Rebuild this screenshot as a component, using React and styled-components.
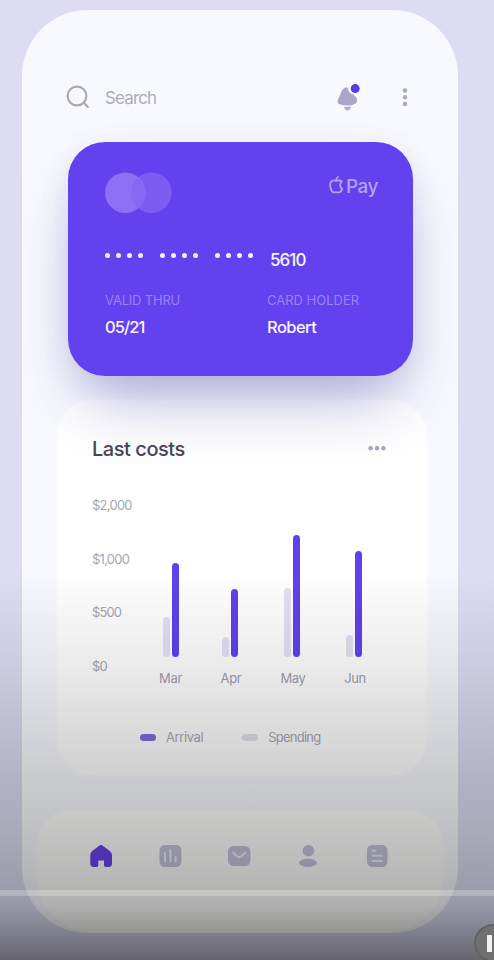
import React from "react";
import styled, { createGlobalStyle } from "styled-components";

const GlobalStyle = createGlobalStyle`
  * { box-sizing: border-box; }
  body { margin: 0; background: #dddcf2; }
`;

const Stage = styled.div`
  position: relative;
  width: 494px;
  height: 960px;
  padding: 10px 36px 0 22px;
  overflow: hidden;
  background: #dddcf3;
  font-family: Inter, "Liberation Sans", sans-serif;
`;

const Phone = styled.main`
  width: 436px;
  height: 923px;
  border-radius: 66px;
  overflow: hidden;
  display: flex;
  flex-direction: column;
  background: #f8f9fe;
`;

const TopBar = styled.header`
  display: flex;
  align-items: center;
  height: 40px;
  margin: 67px 50px 25px 44px;
  flex: none;
`;

const SearchLabel = styled.span`
  flex: 1;
  margin: 1px 0 0 15px;
  font-size: 17px;
  letter-spacing: -0.85px;
  color: #adabbc;
`;

const BellIcon = styled.svg`
  display: block;
  margin-right: 41px;
`;

const PayCard = styled.section`
  position: relative;
  z-index: 1;
  flex: none;
  width: 345px;
  height: 234px;
  margin-left: 46px;
  padding: 30px 35px 0 37px;
  border-radius: 37px;
  color: #f8f5ff;
  background: #6241ee;
  box-shadow: 0 38px 64px -14px rgba(84, 80, 170, 0.4), 0 8px 28px rgba(90, 85, 160, 0.12);
`;

const CardTop = styled.div`
  display: flex;
  justify-content: space-between;
  height: 68px;
`;

const ApplePay = styled.div`
  display: flex;
  align-items: flex-start;
  gap: 2px;
  height: 30px;
  font-size: 19px;
  line-height: 30px;
  font-weight: 500;
  letter-spacing: -0.5px;
  color: #b5a1fa;
  svg { margin-top: 4px; }
`;

const NumberRow = styled.div`
  display: flex;
  height: 40px;
`;

const Dots = styled.div`
  display: flex;
  gap: 6px;
  margin: 13px 17px 0 0;
`;

const Dot = styled.i`
  width: 5px;
  height: 5px;
  border-radius: 50%;
  background: #f5f1ff;
`;

const Digits = styled.span`
  font-size: 17px;
  line-height: 41px;
  font-weight: 500;
  letter-spacing: -0.95px;
`;

const Details = styled.dl`
  display: grid;
  grid-template-columns: 162px 1fr;
  margin: 9px 0 0;
  dt, dd { margin: 0; white-space: nowrap; }
`;

const DetailName = styled.dt`
  font-size: 13px;
  line-height: 22px;
  letter-spacing: ${(p) => p.$tracking};
  color: #9a83f6;
`;

const DetailValue = styled.dd`
  font-size: 16.5px;
  line-height: 33px;
  font-weight: 500;
  letter-spacing: ${(p) => p.$tracking};
`;

const CostsCard = styled.section`
  flex: none;
  width: 370px;
  height: 375px;
  margin: 24px 0 0 35px;
  padding: 34px 0 0 35px;
  border-radius: 36px;
  background: #fff;
  box-shadow: 0 0 6px rgba(255, 255, 255, 0.7);
`;

const CostsHeader = styled.div`
  display: flex;
  justify-content: space-between;
  align-items: center;
  height: 30px;
  padding-right: 41px;
`;

const Title = styled.h2`
  margin: 0;
  font-size: 20px;
  font-weight: 500;
  letter-spacing: -0.45px;
  color: #47445a;
`;

const Chart = styled.div`
  display: flex;
  height: 220px;
  margin-top: 31px;
`;

const Scale = styled.div`
  display: flex;
  flex-direction: column;
  width: 49px;
  gap: 33.5px;
`;

const Tick = styled.span`
  font-size: 13px;
  line-height: 20px;
  letter-spacing: ${(p) => p.$tracking};
  color: #a7a4b5;
`;

const Months = styled.div`
  display: grid;
  grid-template-columns: 59px 60px 63px 62px;
`;

const Month = styled.div`
  display: flex;
  flex-direction: column;
  align-items: center;
  span {
    margin-top: 11px;
    padding-left: ${(p) => p.$labelShift}px;
    font-size: 13px;
    line-height: 20px;
    letter-spacing: -0.35px;
    color: #a19eb0;
  }
`;

const Bars = styled.div`
  display: flex;
  align-items: flex-end;
  gap: 2px;
  height: 162px;
`;

const Bar = styled.i`
  width: 7px;
  height: ${(p) => p.$height}px;
  border-radius: 4px;
  background: ${(p) => (p.$strong ? "#6141ee" : "#e3e0f3")};
`;

const Legend = styled.div`
  display: flex;
  gap: 39px;
  margin: 12px 0 0 48px;
`;

const LegendItem = styled.div`
  display: flex;
  align-items: center;
  gap: 10px;
  height: 20px;
  font-size: 13px;
  letter-spacing: ${(p) => p.$tracking};
  color: #aaa8b7;
  i {
    width: 16px;
    height: 7px;
    border-radius: 4px;
    background: ${(p) => p.$color};
  }
`;

const Nav = styled.nav`
  display: flex;
  flex: none;
  justify-content: space-between;
  width: 408px;
  height: 124px;
  margin: 35px 0 0 14px;
  padding: 34px 55px 0 53px;
  border-radius: 36px 36px 62px 62px;
  background: #fffffe;
  box-shadow: 0 0 5px rgba(255, 255, 254, 0.6);
`;

const NavIcon = styled.svg`
  display: block;
  width: 24px;
  height: 24px;
  color: ${(p) => (p.$active ? "#6744ec" : "#c5c3df")};
`;

const Shade = styled.div`
  position: absolute;
  inset: 570px 0 0;
  pointer-events: none;
  z-index: 2;
  background: linear-gradient(
    rgba(0, 0, 0, 0) 0,
    rgba(0, 0, 0, 0.04) 45px,
    rgba(0, 0, 0, 0.08) 95px,
    rgba(0, 0, 0, 0.125) 140px,
    rgba(0, 0, 0, 0.185) 205px,
    rgba(0, 0, 0, 0.215) 245px,
    rgba(0, 0, 0, 0.265) 295px,
    rgba(0, 0, 0, 0.31) 335px,
    rgba(0, 0, 0, 0.42) 362px,
    rgba(0, 0, 0, 0.54) 390px
  );
`;

const Track = styled.div`
  position: absolute;
  z-index: 3;
  left: 0;
  right: 0;
  top: 890px;
  height: 6px;
  background: rgba(255, 255, 255, 0.24);
`;

const PauseButton = styled.button`
  position: absolute;
  z-index: 3;
  left: 474px;
  top: 924px;
  width: 38px;
  height: 38px;
  display: flex;
  align-items: center;
  gap: 5px;
  padding: 0 0 0 11px;
  border: 2px solid #626068;
  border-radius: 50%;
  background: #70706f;
  i { width: 5px; height: 17px; background: #f2f2f2; }
`;

const months = [
  { name: "Mar", spending: 40, arrival: 94, shift: 0 },
  { name: "Apr", spending: 20, arrival: 68, shift: 2 },
  { name: "May", spending: 69, arrival: 122, shift: 3 },
  { name: "Jun", spending: 22, arrival: 106, shift: 2 },
];

const ticks = [
  ["$2,000", "-0.75px"],
  ["$1,000", "-0.75px"],
  ["$500", "-0.9px"],
  ["$0", "-0.8px"],
];

const navItems = [
  {
    name: "home",
    art: <path fill="currentColor" d="M10.1 1.7Q12 .2 13.9 1.7L21 7.2Q23 8.8 23 11V19.5Q23 23 19.2 23H17Q15 23 15 21V16.5H9.3V21Q9.3 23 7.3 23H5Q1.3 23 1.3 19.5V11Q1.3 8.8 3 7.2Z" />,
  },
  {
    name: "statistics",
    art: (
      <>
        <rect x="1.5" y="1" width="22" height="22" rx="5.5" fill="currentColor" />
        <path d="M7 9V17.5M12.5 6V17.5M17.5 13V17.5" stroke="#f1eff8" strokeWidth="2" strokeLinecap="round" />
      </>
    ),
  },
  {
    name: "mail",
    art: (
      <>
        <rect x="1" y="2" width="22.4" height="20" rx="5.5" fill="currentColor" />
        <path d="M5.7 8.5L10.2 12.3Q12.2 14 14.2 12.3L18.7 8.5" fill="none" stroke="#f1eff8" strokeWidth="1.9" strokeLinecap="round" />
      </>
    ),
  },
  {
    name: "profile",
    art: (
      <g fill="currentColor">
        <circle cx="12.4" cy="6.7" r="5.8" />
        <ellipse cx="12" cy="18.9" rx="8.9" ry="4.2" />
      </g>
    ),
  },
  {
    name: "documents",
    art: (
      <>
        <rect x="2" y="1" width="20.5" height="22" rx="5.5" fill="currentColor" />
        <path d="M7.5 6.7H10.5M7.5 11.8H16.5M7.5 16.9H16.5" stroke="#f1eff8" strokeWidth="2" strokeLinecap="round" />
      </>
    ),
  },
];

export default function App() {
  return (
    <Stage>
      <GlobalStyle />
      <Phone>
        <TopBar>
          <svg width="24" height="24" viewBox="0 0 24 24" fill="none" stroke="#aaa8b8" strokeWidth="2.1" strokeLinecap="round">
            <circle cx="11" cy="11" r="9.4" />
            <path d="M17.7 17.7L21.8 22" />
          </svg>
          <SearchLabel>Search</SearchLabel>
          <BellIcon width="24" height="27" viewBox="0 0 24 27">
            <path fill="#a9a6cb" d="M6.8 4.6Q8.5 3 10.3 3.4Q11.2 3.8 11.1 5Q11.9 9.7 16.2 10.3Q17.3 12 19.4 13.8Q21.3 17.3 18.6 19.4Q14.8 21.6 10.3 21.6Q4.6 21.6 1.4 19.8Q-.3 17.6 1.4 14.2Q3.3 11.6 4 8.6Q4.7 6 6.8 4.6Z" />
            <path fill="#b2b0cb" d="M7 22.8H14Q13.2 26.4 10.5 26.4Q7.8 26.4 7 22.8Z" />
            <circle cx="18.2" cy="4.6" r="4.5" fill="#5140dd" />
          </BellIcon>
          <svg width="6" height="20" viewBox="0 0 6 20" fill="#aaa8ba">
            <circle cx="3" cy="3.5" r="2.2" />
            <circle cx="3" cy="10.3" r="2.2" />
            <circle cx="3" cy="17" r="2.2" />
          </svg>
        </TopBar>

        <PayCard>
          <CardTop>
            <svg width="67" height="42" viewBox="0 0 67 42">
              <circle cx="46.3" cy="20.7" r="20.3" fill="#7c5df1" />
              <circle cx="20.3" cy="20.7" r="20.3" fill="#8e70f4" />
              <path d="M33.3 5.1A20.3 20.3 0 0 1 33.3 36.3A20.3 20.3 0 0 1 33.3 5.1Z" fill="#8768f3" />
            </svg>
            <ApplePay>
              <svg width="15" height="18" viewBox="0 0 15 18" fill="none" stroke="currentColor" strokeWidth="1.8" strokeLinecap="round">
                <path d="M12.7 5.5Q10.8 3.8 8.7 4.6Q7.5 5.1 6.3 4.6Q3.8 3.7 2.1 5.7Q.6 8 1.5 11.5Q2.5 16.4 5.3 16.3H9.6Q12.3 16.3 13.2 12.8Q11.1 11.5 11.1 9.2Q11.1 6.8 12.7 5.5Z" />
                <path d="M7.4 3.8Q7.2 1.6 9.1 1" />
              </svg>
              <span>Pay</span>
            </ApplePay>
          </CardTop>
          <NumberRow>
            {[0, 1, 2].map((group) => (
              <Dots key={group}>
                {[0, 1, 2, 3].map((dot) => <Dot key={dot} />)}
              </Dots>
            ))}
            <Digits>5610</Digits>
          </NumberRow>
          <Details>
            <DetailName $tracking="-0.2px">VALID THRU</DetailName>
            <DetailName $tracking="0px">CARD HOLDER</DetailName>
            <DetailValue $tracking="-0.9px">05/21</DetailValue>
            <DetailValue $tracking="-0.55px">Robert</DetailValue>
          </Details>
        </PayCard>

        <CostsCard>
          <CostsHeader>
            <Title>Last costs</Title>
            <svg width="18" height="6" viewBox="0 0 18 6" fill="#aaa7b9">
              <circle cx="2.6" cy="2.2" r="2.2" />
              <circle cx="9" cy="2.2" r="2.2" />
              <circle cx="15.4" cy="2.2" r="2.2" />
            </svg>
          </CostsHeader>
          <Chart>
            <Scale>
              {ticks.map(([label, tracking]) => <Tick key={label} $tracking={tracking}>{label}</Tick>)}
            </Scale>
            <Months>
              {months.map((m) => (
                <Month key={m.name} $labelShift={m.shift}>
                  <Bars>
                    <Bar $height={m.spending} />
                    <Bar $height={m.arrival} $strong />
                  </Bars>
                  <span>{m.name}</span>
                </Month>
              ))}
            </Months>
          </Chart>
          <Legend>
            <LegendItem $color="#806bdf" $tracking="-0.4px"><i />Arrival</LegendItem>
            <LegendItem $color="#e1dfeb" $tracking="-0.75px"><i />Spending</LegendItem>
          </Legend>
        </CostsCard>

        <Nav>
          {navItems.map((item, i) => (
            <NavIcon key={item.name} viewBox="0 0 24 24" $active={i === 0}>{item.art}</NavIcon>
          ))}
        </Nav>
      </Phone>
      <Shade />
      <Track />
      <PauseButton aria-label="Pause"><i /><i /></PauseButton>
    </Stage>
  );
}
